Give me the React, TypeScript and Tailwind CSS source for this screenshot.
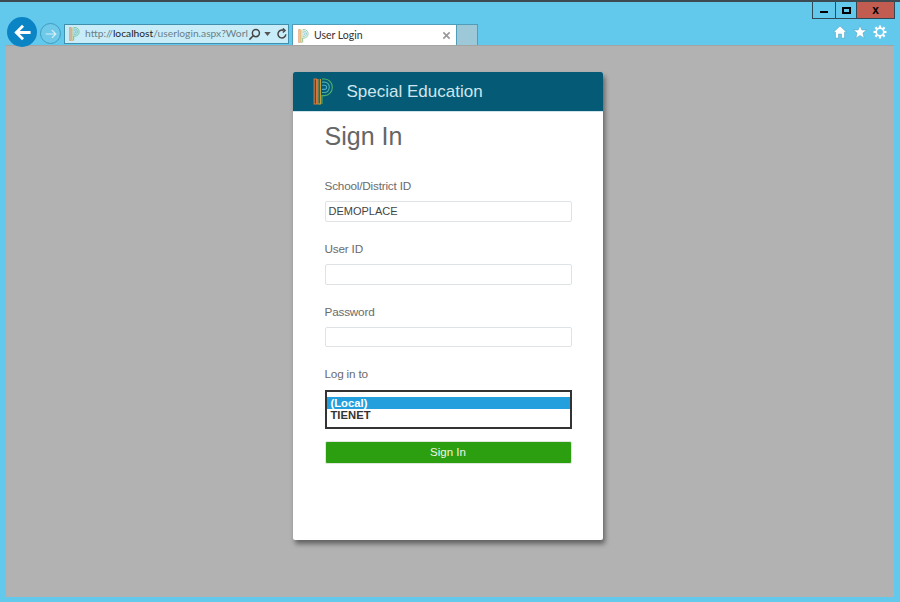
import React from "react";

function PLogo({ className }: { className?: string }) {
  return (
    <svg viewBox="0 0 20 26" className={className} fill="none" strokeWidth="1.1">
      <path d="M1 1V25H3.2V1Z" stroke="#d9763a" />
      <path d="M4.6 1V25H7V1" stroke="#c9a53c" />
      <path d="M8.5 1H11A7.5 8 0 0 1 11 17H8.5V25" stroke="#4fae6a" />
      <path d="M8.5 4H11A4.6 5 0 0 1 11 14H8.5" stroke="#49b0a8" />
      <path d="M8.5 7H11A2 2 0 0 1 11 11H8.5" stroke="#49a8c8" />
    </svg>
  );
}

function Field({ label, value }: { label: string; value?: string }) {
  return (
    <div className="flex flex-col">
      <label className="h-[15px] text-[11.75px] leading-[15px] text-[#6b6b6b] tracking-[-0.2px]">{label}</label>
      <div className="mt-[8px] h-[20.75px] w-[247px] rounded-[2px] border border-[#dfe3e5] bg-white pl-[3px] text-[11px] leading-[18px] text-[#444]">
        {value}
      </div>
    </div>
  );
}

export default function App() {
  return (
    <div className="relative flex h-[602px] w-[900px] flex-col overflow-hidden border-t-2 border-[#3d4a52] bg-[#63c9ec] font-['Liberation_Sans',sans-serif]">
      {/* Window controls */}
      <div className="absolute right-[5px] top-0 flex h-[17px] border border-t-0 border-[#2f4a57]">
        <div className="flex w-[23px] items-center justify-center border-r border-[#2f4a57]">
          <div className="mt-[3px] h-[2px] w-[8px] bg-black" />
        </div>
        <div className="flex w-[21px] items-center justify-center border-r border-[#2f4a57]">
          <div className="h-[7px] w-[9px] border-2 border-black" />
        </div>
        <div className="flex w-[37px] items-center justify-center bg-[#c35c50] text-[12px] font-bold leading-none text-black">
          x
        </div>
      </div>

      {/* Browser toolbar */}
      <div className="relative z-10 flex h-[43px] shrink-0 items-end pl-[7px]">
        <div className="mb-[-2px] flex h-[30px] w-[30px] items-center justify-center rounded-full bg-[#0a84c4]">
          <svg viewBox="0 0 20 20" className="h-[19px] w-[19px]" fill="none" stroke="white" strokeWidth="3" strokeLinecap="square">
            <path d="M17 10H4M9.5 4L3.5 10L9.5 16" />
          </svg>
        </div>
        <div className="mb-[1px] ml-[3px] flex h-[21px] w-[21px] items-center justify-center rounded-full border border-[#3f9cc0] bg-[#6fc9e8]">
          <svg viewBox="0 0 16 16" className="h-[14px] w-[14px]" fill="none" stroke="#d8eff7" strokeWidth="1.4">
            <path d="M2 8H13M9 3.5L13.5 8L9 12.5" />
          </svg>
        </div>
        <div className="mb-[1px] ml-[3px] flex h-[20px] w-[225px] items-center border border-[#3f8fad] bg-[#c8ecf8] pl-[4px] text-[10.25px] text-[#6a7f88]">
          <PLogo className="h-[14px] w-[11px] shrink-0" />
          <span className="ml-[5px] w-[160px] whitespace-nowrap font-['Lato',sans-serif]">
            http://<span className="text-[#222]">localhost</span>/userlogin.aspx?Worl
          </span>
          <svg viewBox="0 0 14 14" className="ml-[3px] h-[13px] w-[13px] shrink-0" fill="none" stroke="#444" strokeWidth="1.6">
            <circle cx="8.5" cy="5.5" r="3.8" />
            <path d="M5.6 8.4L1.5 12.5" />
          </svg>
          <svg viewBox="0 0 8 5" className="ml-[3px] h-[4px] w-[7px] shrink-0" fill="#555">
            <path d="M0 0H8L4 5Z" />
          </svg>
          <svg viewBox="0 0 14 14" className="ml-[5px] h-[12px] w-[12px] shrink-0" fill="none" stroke="#444" strokeWidth="1.7">
            <path d="M11.5 7.5A4.6 4.6 0 1 1 8.5 2.7M8 .5L10.5 3L8 5.2" />
          </svg>
        </div>
        <div className="ml-[3px] flex h-[21px] w-[165px] items-center border border-b-0 border-[#4f9db8] bg-white pb-[0px] pl-[5px] pt-[1px] font-['Lato',sans-serif] text-[10.5px] text-[#333]">
          <PLogo className="h-[14px] w-[11px] shrink-0" />
          <span className="ml-[5px] flex-1">User Login</span>
          <svg viewBox="0 0 10 10" className="mr-[5px] h-[9px] w-[9px]" stroke="#999" strokeWidth="1.8">
            <path d="M1.5 1.5L8.5 8.5M8.5 1.5L1.5 8.5" />
          </svg>
        </div>
        <div className="h-[21px] w-[21px] border border-b-0 border-l-0 border-[#4f9db8] bg-[#9dc8d8]" />
        <div className="mb-[6px] ml-auto mr-[13px] flex items-center gap-[6px]">
          <svg viewBox="0 0 14 14" className="h-[14px] w-[14px]" fill="white" stroke="#4f9db8" strokeWidth="0.5">
            <path d="M7 1L13.5 7.2H11.5V13H8.5V9H5.5V13H2.5V7.2H.5Z" />
          </svg>
          <svg viewBox="0 0 14 14" className="h-[14px] w-[14px]" fill="white" stroke="#4f9db8" strokeWidth="0.5">
            <path d="M7 .7L8.9 5H13.6L9.9 8L11.2 13.2L7 10.4L2.8 13.2L4.1 8L.4 5H5.1Z" />
          </svg>
          <svg viewBox="0 0 14 14" className="h-[14px] w-[14px]" fill="none" stroke="white" strokeWidth="1.7">
            <circle cx="7" cy="7" r="3.8" />
            <path strokeWidth="2.2" d="M7 .5V3M7 11V13.5M.5 7H3M11 7H13.5M2.4 2.4L4 4M10 10L11.6 11.6M11.6 2.4L10 4M4 10L2.4 11.6" />
          </svg>
        </div>
      </div>

      {/* Page area */}
      <div className="mx-[6px] mb-[5px] flex flex-1 justify-center border-t border-[#a3a3a3] bg-[#b2b2b2] pr-[5px] pt-[26px]">
        <div className="flex h-[468px] w-[310px] flex-col overflow-hidden rounded-[2px] bg-white shadow-[2px_4px_5px_rgba(0,0,0,0.45)]">
          <div className="flex h-[40px] shrink-0 items-center border-b border-[#cfe3ea] bg-[#055a75] pl-[20px]">
            <PLogo className="h-[27px] w-[21px]" />
            <span className="ml-[13px] text-[17px] text-[#cfe6ee]">Special Education</span>
          </div>
          <div className="flex flex-col pl-[32px]">
            <h1 className="mt-[8px] h-[34px] text-[25px] leading-[32px] text-[#666]">Sign In</h1>
            <div className="mt-[24px] flex flex-col gap-[19px]">
              <Field label="School/District ID" value="DEMOPLACE" />
              <Field label="User ID" />
              <Field label="Password" />
              <div className="flex flex-col">
                <label className="h-[15px] text-[11.75px] leading-[15px] text-[#6b6b6b] tracking-[-0.2px]">Log in to</label>
                <div className="mt-[9px] h-[39px] w-[247px] border-2 border-[#333] bg-white pt-[5px] text-[11.25px] font-bold leading-[12px]">
                  <div className="bg-[#229fdc] pl-[4px] text-white">(Local)</div>
                  <div className="pl-[4px] text-[#333]">TIENET</div>
                </div>
              </div>
            </div>
            <button className="mt-[11.5px] h-[23.5px] w-[247px] rounded-[2px] border border-[#dfe8dc] bg-[#2c9f11] text-[11.5px] text-[#eef6ea]">
              Sign In
            </button>
          </div>
        </div>
      </div>
    </div>
  );
}
